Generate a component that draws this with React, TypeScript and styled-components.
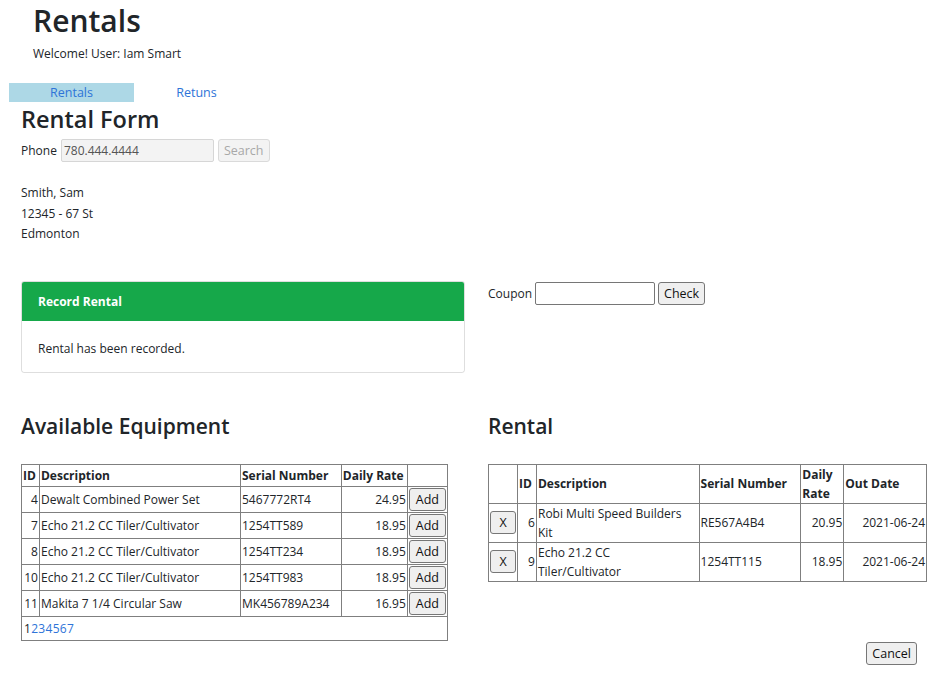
import styled, { createGlobalStyle } from "styled-components";

const GlobalStyle = createGlobalStyle`
  html, body {
    margin: 0;
    padding: 0;
    background: #fff;
  }
  body {
    font-family: "Open Sans", "Noto Sans", sans-serif;
    font-size: 12px;
    color: #212529;
  }
  * {
    box-sizing: border-box;
  }
`;

const Page = styled.div`
  width: 944px;
  height: 677px;
  overflow: hidden;
`;

const Header = styled.header`
  padding: 0 0 0 33px;
`;

const Title = styled.h1`
  margin: 0;
  font-size: 30px;
  line-height: 42px;
  font-weight: 600;
`;

const Welcome = styled.div`
  margin-top: 2px;
  line-height: 20px;
`;

const Nav = styled.nav`
  display: flex;
  margin: 19px 0 0 9px;
`;

const Tab = styled.a<{ $active?: boolean }>`
  display: block;
  width: 125px;
  height: 19px;
  line-height: 19px;
  font-size: 12.5px;
  text-align: center;
  color: #2e74d8;
  text-decoration: none;
  background: ${(p) => (p.$active ? "#add8e6" : "transparent")};
`;

const Main = styled.main`
  padding: 0 21px;
`;

const FormTitle = styled.h2`
  margin: 2px 0 5px;
  font-size: 23.5px;
  line-height: 30px;
  font-weight: 600;
`;

const Row = styled.div`
  display: flex;
  align-items: center;
  gap: 4px;
`;

const Label = styled.label`
  font-size: 12px;
`;

const TextInput = styled.input<{ $width: number; $readonly?: boolean }>`
  width: ${(p) => p.$width}px;
  height: 23px;
  padding: 1px 2px;
  font-family: inherit;
  font-size: 12px;
  color: #545454;
  background: ${(p) => (p.$readonly ? "#f3f3f3" : "#fff")};
  border: 1px solid ${(p) => (p.$readonly ? "#d6d6d6" : "#767676")};
  border-radius: 2px;
`;

const Button = styled.button<{ $disabled?: boolean }>`
  height: 23px;
  padding: 0 5px;
  font-family: inherit;
  font-size: 12.5px;
  color: ${(p) => (p.$disabled ? "#a8a8a8" : "#111")};
  background: ${(p) => (p.$disabled ? "#f3f3f3" : "#efefef")};
  border: 1px solid ${(p) => (p.$disabled ? "#dadada" : "#767676")};
  border-radius: 3px;
`;

const Address = styled.div`
  margin-top: 21px;
  line-height: 20.5px;
`;

const Columns = styled.div`
  display: grid;
  grid-template-columns: 444px 1fr;
  column-gap: 23px;
  margin-top: 36px;
`;

const Card = styled.div`
  border: 1px solid rgba(0, 0, 0, 0.13);
  border-radius: 3px;
  overflow: hidden;
  height: 92px;
`;

const CardHeader = styled.div`
  background: #16a84a;
  color: #fff;
  font-weight: 700;
  height: 39px;
  line-height: 39px;
  padding-left: 16px;
`;

const CardBody = styled.div`
  padding: 18px 16px;
  line-height: 20px;
`;

const CouponRow = styled(Row)`
  margin-top: 1px;
  gap: 3px;
`;

const SectionTitle = styled.h3<{ $top: number }>`
  margin: ${(p) => p.$top}px 0 18px;
  font-size: 21px;
  line-height: 40px;
  font-weight: 600;
`;

const Table = styled.table<{ $width: number }>`
  width: ${(p) => p.$width}px;
  border-collapse: collapse;
  font-size: 12px;
  th,
  td {
    border: 1px solid #7f7f7f;
    padding: 0 1px;
    line-height: 19px;
  }
  th {
    text-align: left;
    font-weight: 700;
    height: 22px;
  }
`;

const NumCell = styled.td`
  text-align: right;
`;

const WrapCell = styled.td`
  && {
    padding-right: 10px;
  }
`;

const ButtonCell = styled.td`
  && {
    padding: 1px 1px;
    height: 26px;
  }
`;

const Pager = styled.td`
  && {
    padding: 2px 2px 1px;
    height: 24px;
    letter-spacing: 0.3px;
  }
  a {
    color: #2e74d8;
    text-decoration: none;
  }
`;

const SmallButton = styled(Button)<{ $wide?: boolean }>`
  height: 23px;
  padding: 0 6px;
  min-width: ${(p) => (p.$wide ? "26px" : "0")};
`;

const CancelRow = styled.div`
  display: flex;
  justify-content: flex-end;
  padding-right: 6px;
  margin-top: 1px;
`;

const equipment = [
  { id: 4, desc: "Dewalt Combined Power Set", serial: "5467772RT4", rate: "24.95" },
  { id: 7, desc: "Echo 21.2 CC Tiler/Cultivator", serial: "1254TT589", rate: "18.95" },
  { id: 8, desc: "Echo 21.2 CC Tiler/Cultivator", serial: "1254TT234", rate: "18.95" },
  { id: 10, desc: "Echo 21.2 CC Tiler/Cultivator", serial: "1254TT983", rate: "18.95" },
  { id: 11, desc: "Makita 7 1/4 Circular Saw", serial: "MK456789A234", rate: "16.95" },
];

const rented = [
  { id: 6, desc: "Robi Multi Speed Builders Kit", serial: "RE567A4B4", rate: "20.95", out: "2021-06-24" },
  { id: 9, desc: "Echo 21.2 CC Tiler/Cultivator", serial: "1254TT115", rate: "18.95", out: "2021-06-24" },
];

function App() {
  return (
    <Page>
      <GlobalStyle />
      <Header>
        <Title>Rentals</Title>
        <Welcome>Welcome! User: Iam Smart</Welcome>
      </Header>
      <Nav>
        <Tab $active href="#">Rentals</Tab>
        <Tab href="#">Retuns</Tab>
      </Nav>
      <Main>
        <FormTitle>Rental Form</FormTitle>
        <Row>
          <Label>Phone</Label>
          <TextInput $width={153} $readonly readOnly value="780.444.4444" />
          <Button $disabled disabled>Search</Button>
        </Row>
        <Address>
          <div>Smith, Sam</div>
          <div>12345 - 67 St</div>
          <div>Edmonton</div>
        </Address>
        <Columns>
          <div>
            <Card>
              <CardHeader>Record Rental</CardHeader>
              <CardBody>Rental has been recorded.</CardBody>
            </Card>
            <SectionTitle $top={33}>Available Equipment</SectionTitle>
            <Table $width={427}>
              <colgroup>
                <col style={{ width: 18 }} />
                <col style={{ width: 203 }} />
                <col style={{ width: 101 }} />
                <col style={{ width: 66 }} />
                <col style={{ width: 38 }} />
              </colgroup>
              <thead>
                <tr>
                  <th>ID</th>
                  <th>Description</th>
                  <th>Serial Number</th>
                  <th style={{ whiteSpace: "nowrap" }}>Daily Rate</th>
                  <th></th>
                </tr>
              </thead>
              <tbody>
                {equipment.map((e) => (
                  <tr key={e.id}>
                    <NumCell>{e.id}</NumCell>
                    <td>{e.desc}</td>
                    <td>{e.serial}</td>
                    <NumCell>{e.rate}</NumCell>
                    <ButtonCell>
                      <SmallButton>Add</SmallButton>
                    </ButtonCell>
                  </tr>
                ))}
                <tr>
                  <Pager colSpan={5}>
                    1
                    {[2, 3, 4, 5, 6, 7].map((n) => (
                      <a key={n} href="#">{n}</a>
                    ))}
                  </Pager>
                </tr>
              </tbody>
            </Table>
          </div>
          <div>
            <CouponRow>
              <Label>Coupon</Label>
              <TextInput $width={120} />
              <Button>Check</Button>
            </CouponRow>
            <SectionTitle $top={101}>Rental</SectionTitle>
            <Table $width={439}>
              <colgroup>
                <col style={{ width: 29 }} />
                <col style={{ width: 19 }} />
                <col style={{ width: 163 }} />
                <col style={{ width: 102 }} />
                <col style={{ width: 43 }} />
                <col style={{ width: 83 }} />
              </colgroup>
              <thead>
                <tr>
                  <th></th>
                  <th>ID</th>
                  <th>Description</th>
                  <th>Serial Number</th>
                  <th>Daily Rate</th>
                  <th>Out Date</th>
                </tr>
              </thead>
              <tbody>
                {rented.map((r) => (
                  <tr key={r.id}>
                    <ButtonCell>
                      <SmallButton $wide>X</SmallButton>
                    </ButtonCell>
                    <NumCell>{r.id}</NumCell>
                    <WrapCell>{r.desc}</WrapCell>
                    <td>{r.serial}</td>
                    <NumCell>{r.rate}</NumCell>
                    <NumCell>{r.out}</NumCell>
                  </tr>
                ))}
              </tbody>
            </Table>
          </div>
        </Columns>
        <CancelRow>
          <Button>Cancel</Button>
        </CancelRow>
      </Main>
    </Page>
  );
}

export default App;
